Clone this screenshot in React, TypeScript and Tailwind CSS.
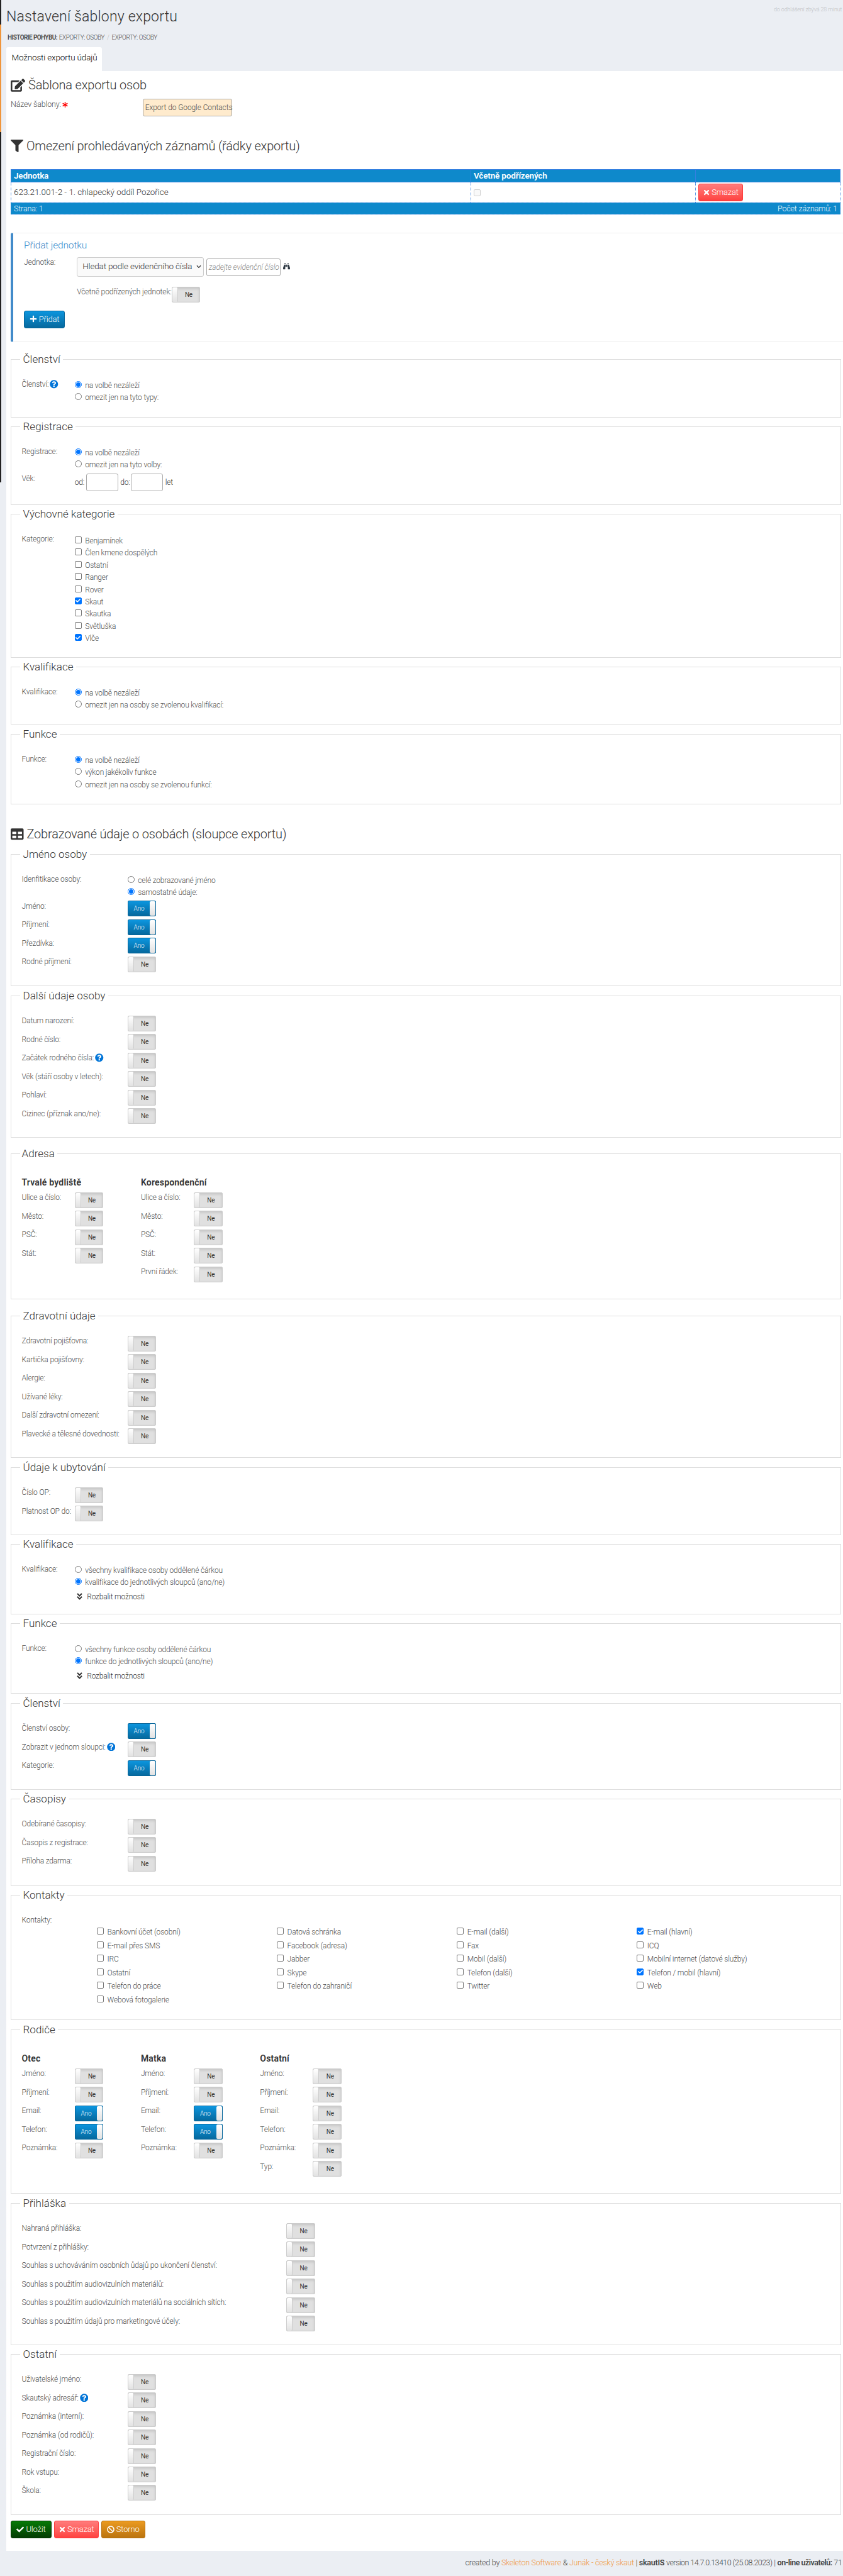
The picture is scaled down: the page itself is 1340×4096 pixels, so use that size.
import type { ReactNode } from "react";
import {
  FaEdit,
  FaFilter,
  FaAsterisk,
  FaTimes,
  FaPlus,
  FaTable,
  FaBinoculars,
  FaQuestionCircle,
  FaAngleDoubleDown,
  FaCheck,
  FaBan,
  FaChevronDown,
} from "react-icons/fa";

function Heading({ icon, className, children }: { icon: ReactNode; className: string; children: ReactNode }) {
  return (
    <h3
      className={`flex h-[26px] items-center whitespace-nowrap text-[20px] leading-[26px] tracking-[-0.18px] text-[#333] ${className}`}
    >
      {icon}
      <span>{children}</span>
    </h3>
  );
}

function Help() {
  return <FaQuestionCircle className="mt-[1px] ml-[2px] size-[13.5px] text-[#0275d8]" />;
}

function Label({ className = "w-[84.2px]", help, children }: { className?: string; help?: boolean; children: ReactNode }) {
  return (
    <div className={`mt-[0.6px] flex h-[17px] shrink-0 items-start whitespace-nowrap text-[#4c4c4c] leading-[17px] ${className}`}>
      <span>{children}</span>
      {help && <Help />}
    </div>
  );
}

function Switch({ on }: { on?: boolean }) {
  return on ? (
    <div className="flex h-[25px] w-[45.5px] shrink-0 overflow-hidden rounded-[2px] border border-[#05659a] bg-linear-to-b from-[#0c95de] to-[#06699e] text-[10px] leading-[23px] text-[#eef7fc]">
      <span className="flex-1 text-center">Ano</span>
      <span className="w-[9px] rounded-[2px] bg-linear-to-b from-white to-[#e2e2e2]" />
    </div>
  ) : (
    <div className="flex h-[25px] w-[45.5px] shrink-0 overflow-hidden rounded-[2px] border border-[#ccc] bg-[#e0e0e0] text-[10px] leading-[23px] font-normal text-[#333] shadow-[inset_0_2px_4px_rgba(0,0,0,0.13)]">
      <span className="w-[9px] rounded-[2px] border-r border-[#ccc] bg-linear-to-b from-white to-[#e2e2e2]" />
      <span className="flex-1 text-center">Ne</span>
    </div>
  );
}

type Item = { label: string; on?: boolean; help?: boolean };

function SwitchRows({ items, labelClass }: { items: Item[]; labelClass?: string }) {
  return (
    <div>
      {items.map((item) => (
        <div key={item.label} className="flex h-[29.45px] items-start">
          <Label className={labelClass} help={item.help}>
            {item.label}
          </Label>
          <Switch on={item.on} />
        </div>
      ))}
    </div>
  );
}

function Radio({ checked, children }: { checked?: boolean; children: ReactNode }) {
  return (
    <div className="flex h-[19.4px] items-center whitespace-nowrap text-[#4c4c4c]">
      <span
        className={`flex size-[11px] shrink-0 items-center justify-center rounded-full border ${
          checked ? "border-[#0075ff]" : "border-[#767676]"
        }`}
      >
        {checked && <span className="size-[7px] rounded-full bg-[#0075ff]" />}
      </span>
      <span className="mt-[4px] ml-[5.5px] leading-[15px]">{children}</span>
    </div>
  );
}

function Check({ checked, className = "h-[19.4px]", children }: { checked?: boolean; className?: string; children: ReactNode }) {
  return (
    <div className={`flex items-center whitespace-nowrap text-[#4c4c4c] ${className}`}>
      <span
        className={`flex size-[11px] shrink-0 items-center justify-center rounded-[2px] border ${
          checked ? "border-[#0075ff] bg-[#0075ff]" : "border-[#767676] bg-white"
        }`}
      >
        {checked && <FaCheck className="size-[8px] text-white" />}
      </span>
      <span className="mt-[4px] ml-[5.5px] leading-[15px]">{children}</span>
    </div>
  );
}

function Fieldset({
  title,
  className,
  legendClass = "px-[4.5px]",
  children,
}: {
  title: string;
  className: string;
  legendClass?: string;
  children: ReactNode;
}) {
  return (
    <section className={`mr-[3px] ml-[7px] border border-[#ddd] ${className}`}>
      <h4
        className={`-mt-[13px] ml-[14px] h-[24px] w-fit bg-white text-[17px] leading-[24px] tracking-[0.03px] whitespace-nowrap text-[#333] ${legendClass}`}
      >
        {title}
      </h4>
      <div className="flex pt-[20px] pl-[16.5px]">{children}</div>
    </section>
  );
}

function Options({ children }: { children: ReactNode }) {
  return <div className="-mt-[1px]">{children}</div>;
}

function Expand() {
  return (
    <div className="mt-[4px] flex h-[19px] items-center text-[#333]">
      <FaAngleDoubleDown className="ml-[1px] size-[13px]" />
      <span className="mt-[1px] ml-[5.5px] leading-[16px]">Rozbalit možnosti</span>
    </div>
  );
}

function Column({ title, className, items }: { title: string; className: string; items: Item[] }) {
  return (
    <div className={className}>
      <h5 className="mb-[6px] h-[24px] pt-[4px] text-[14px] leading-[20px] font-semibold tracking-[0.2px] text-[#333]">{title}</h5>
      <SwitchRows items={items} />
    </div>
  );
}

const wide = "w-[168.3px]";

const contacts: { label: string; checked?: boolean }[][] = [
  [
    { label: "Bankovní účet (osobní)" },
    { label: "Datová schránka" },
    { label: "E-mail (další)" },
    { label: "E-mail (hlavní)", checked: true },
  ],
  [{ label: "E-mail přes SMS" }, { label: "Facebook (adresa)" }, { label: "Fax" }, { label: "ICQ" }],
  [
    { label: "IRC" },
    { label: "Jabber" },
    { label: "Mobil (další)" },
    { label: "Mobilní internet (datové služby)" },
  ],
  [
    { label: "Ostatní" },
    { label: "Skype" },
    { label: "Telefon (další)" },
    { label: "Telefon / mobil (hlavní)", checked: true },
  ],
  [{ label: "Telefon do práce" }, { label: "Telefon do zahraničí" }, { label: "Twitter" }, { label: "Web" }],
  [{ label: "Webová fotogalerie" }],
];

const categories = [
  { label: "Benjamínek" },
  { label: "Člen kmene dospělých" },
  { label: "Ostatní" },
  { label: "Ranger" },
  { label: "Rover" },
  { label: "Skaut", checked: true },
  { label: "Skautka" },
  { label: "Světluška" },
  { label: "Vlče", checked: true },
];

const btn = "flex h-[28.6px] items-center justify-center rounded-[3px] border pb-[1px] text-[13px] text-white";

export default function App() {
  return (
    <div className="flex h-[4096px] w-[1340px] overflow-hidden bg-[#ebeef3] font-['Roboto','Liberation_Sans',sans-serif] text-[12px] font-light tracking-[-0.16px]">
      <div className="w-[2px] shrink-0">
        <div className="h-[39px] bg-[#222]" />
        <div className="h-[171px] bg-[#f0953b]" />
        <div className="h-[557px] bg-[#222]" />
      </div>

      <div className="ml-[8px] flex w-[1330px] shrink-0 flex-col">
        <header className="h-[113px] shrink-0">
          <div className="flex h-[53px] justify-between">
            <h1 className="mt-[11.6px] text-[23px] leading-[30px] tracking-[0.2px] text-[#333]">Nastavení šablony exportu</h1>
            <div className="mt-[8px] w-[110px] text-[9px] leading-[14px] tracking-[-0.15px] whitespace-nowrap text-[#c0c2c5]">
              do odhlášení zbývá 28 minut
            </div>
          </div>
          <div className="ml-[2px] flex h-[14px] text-[10px] leading-[14px] tracking-[-0.6px] whitespace-nowrap text-[#4c4c4c]">
            <b className="font-semibold">HISTORIE POHYBU:</b>
            <span className="ml-[3px] tracking-[-0.45px]">EXPORTY: OSOBY</span>
            <span className="mx-[4px] text-[#bbb]">/</span>
            <span className="tracking-[-0.45px]">EXPORTY: OSOBY</span>
          </div>
          <div className="mt-[8px] h-[38px] w-[152px] rounded-t-[3px] bg-white pl-[8.5px] text-[13.5px] leading-[33px] whitespace-nowrap text-black">
            Možnosti exportu údajů
          </div>
        </header>

        <main className="h-[3943px] shrink-0 bg-white">
          <div className="h-[9.4px]" />
          <Heading className="ml-[7px]" icon={<FaEdit className="mr-[5px] size-[23px]" />}>
            Šablona exportu osob
          </Heading>
          <div className="mt-[9px] ml-[7px] flex h-[28px]">
            <div className="flex w-[210.2px] text-[12.5px] leading-[18px] text-[#4c4c4c]">
              Název šablony:
              <FaAsterisk className="mt-[5px] ml-[2px] size-[9px] text-[#f00]" />
            </div>
            <div className="h-[28px] w-[141.5px] rounded-[3px] border border-[#aaa] bg-[#ffebcd] pl-[2.5px] text-[12px] leading-[26px] tracking-[-0.1px] whitespace-nowrap text-[#4c4c4c]">
              Export do Google Contacts
            </div>
          </div>

          <Heading className="mt-[33.8px] ml-[7px]" icon={<FaFilter className="mr-[5px] size-[20px]" />}>
            Omezení prohledávaných záznamů (řádky exportu)
          </Heading>

          <div className="mt-[24px] mr-[4px] ml-[7px] text-[13.5px]">
            <div className="flex h-[21px] border border-[#3580e0] bg-[#0e89cb] leading-[18px] font-semibold text-white">
              <div className="w-[731px] border-r border-[#3580e0] pl-[4px]">Jednotka</div>
              <div className="w-[357px] border-r border-[#3580e0] pl-[4px]">Včetně podřízených</div>
            </div>
            <div className="flex h-[32px] items-stretch border-x border-dotted border-[#3580e0] text-[#333]">
              <div className="w-[731px] border-r border-dotted border-[#3580e0] pl-[4px] leading-[31px] tracking-[-0.05px]">
                623.21.001-2 - 1. chlapecký oddíl Pozořice
              </div>
              <div className="flex w-[357px] items-center border-r border-dotted border-[#3580e0] pl-[4px]">
                <span className="size-[11px] rounded-[2px] border border-[#cfcfcf] bg-[#f9f9f9]" />
              </div>
              <div className="flex items-center pl-[4px]">
                <div className={`${btn} w-[71px] border-[#ff3c3c] bg-linear-to-b from-[#ff7b7b] to-[#ff4040]`}>
                  <FaTimes className="mr-[2px] size-[12px]" />
                  Smazat
                </div>
              </div>
            </div>
            <div className="flex h-[19px] justify-between border border-dotted border-[#3580e0] bg-[#0e89cb] px-[4px] text-[12.5px] leading-[17px] text-[#f2f9fd]">
              <span>Strana: 1</span>
              <span>Počet záznamů: 1</span>
            </div>
          </div>

          <div className="mt-[28.6px] ml-[7px] h-[174px] rounded-l-[3px] border-y border-l-[4px] border-y-[#eee] border-l-[#428bca] pl-[17px]">
            <h4 className="mt-[8.8px] h-[20px] text-[15.5px] leading-[20px] text-[#428bca]">Přidat jednotku</h4>
            <div className="mt-[9px] flex h-[31px]">
              <Label>Jednotka:</Label>
              <div className="flex h-[31px] w-[202px] shrink-0 items-center justify-between rounded-[3px] border border-[#ccc] bg-[#fafafa] pr-[3px] pl-[8px] text-[13.5px] whitespace-nowrap text-[#333]">
                <span className="-mt-[1px]">Hledat podle evidenčního čísla</span>
                <FaChevronDown className="size-[8px] shrink-0" />
              </div>
              <div className="mt-[2.5px] ml-[3.5px] h-[28px] w-[118px] rounded-[3px] border border-[#aaa] pl-[3px] text-[12px] leading-[27px] tracking-[-0.1px] whitespace-nowrap text-[#888] italic">
                zadejte evidenční číslo
              </div>
              <FaBinoculars className="mt-[9px] ml-[4px] size-[11px] text-[#2f3a44]" />
            </div>
            <div className="mt-[16px] ml-[84.2px] flex h-[25px]">
              <Label className="w-[150.5px] tracking-[-0.1px]">Včetně podřízených jednotek:</Label>
              <Switch />
            </div>
            <div className={`${btn} mt-[13px] w-[65px] border-[#05659a] bg-linear-to-b from-[#0c95de] to-[#06699e]`}>
              <FaPlus className="mr-[3px] size-[12px]" />
              Přidat
            </div>
          </div>

          <Fieldset title="Členství" className="mt-[27px] h-[93px]">
            <Label help>Členství:</Label>
            <Options>
              <Radio checked>na volbě nezáleží</Radio>
              <Radio>omezit jen na tyto typy:</Radio>
            </Options>
          </Fieldset>

          <Fieldset title="Registrace" className="mt-[14px] h-[125px]">
            <div>
              <div className="flex">
                <Label>Registrace:</Label>
                <Options>
                  <Radio checked>na volbě nezáleží</Radio>
                  <Radio>omezit jen na tyto volby:</Radio>
                </Options>
              </div>
              <div className="mt-[5px] flex h-[28px]">
                <Label>Věk:</Label>
                <div className="flex items-center leading-[28px] text-[#333]">
                  <span className="w-[18.5px]">od:</span>
                  <span className="h-[28px] w-[50.5px] rounded-[3px] border border-[#aaa]" />
                  <span className="w-[20.5px] pl-[3.5px]">do:</span>
                  <span className="h-[28px] w-[50.5px] rounded-[3px] border border-[#aaa]" />
                  <span className="pl-[4px]">let</span>
                </div>
              </div>
            </div>
          </Fieldset>

          <Fieldset title="Výchovné kategorie" className="mt-[14px] h-[229px]">
            <Label>Kategorie:</Label>
            <div>
              {categories.map((c) => (
                <Check key={c.label} checked={c.checked}>
                  {c.label}
                </Check>
              ))}
            </div>
          </Fieldset>

          <Fieldset title="Kvalifikace" className="mt-[14px] h-[92px]">
            <Label>Kvalifikace:</Label>
            <Options>
              <Radio checked>na volbě nezáleží</Radio>
              <Radio>omezit jen na osoby se zvolenou kvalifikací:</Radio>
            </Options>
          </Fieldset>

          <Fieldset title="Funkce" className="mt-[15px] h-[112px]">
            <Label>Funkce:</Label>
            <Options>
              <Radio checked>na volbě nezáleží</Radio>
              <Radio>výkon jakékoliv funkce</Radio>
              <Radio>omezit jen na osoby se zvolenou funkcí:</Radio>
            </Options>
          </Fieldset>

          <Heading className="mt-[34px] ml-[7px]" icon={<FaTable className="mr-[5px] size-[20.5px]" />}>
            Zobrazované údaje o osobách (sloupce exportu)
          </Heading>

          <Fieldset title="Jméno osoby" className="mt-[19px] h-[210px]">
            <div>
              <div className="mb-[4.5px] flex h-[38px]">
                <Label className={wide}>Idenfitikace osoby:</Label>
                <Options>
                  <Radio>celé zobrazované jméno</Radio>
                  <Radio checked>samostatné údaje:</Radio>
                </Options>
              </div>
              <SwitchRows
                labelClass={wide}
                items={[
                  { label: "Jméno:", on: true },
                  { label: "Příjmení:", on: true },
                  { label: "Přezdívka:", on: true },
                  { label: "Rodné příjmení:" },
                ]}
              />
            </div>
          </Fieldset>

          <Fieldset title="Další údaje osoby" className="mt-[15px] h-[226px]">
            <SwitchRows
              labelClass={wide}
              items={[
                { label: "Datum narození:" },
                { label: "Rodné číslo:" },
                { label: "Začátek rodného čísla:", help: true },
                { label: "Věk (stáří osoby v letech):" },
                { label: "Pohlaví:" },
                { label: "Cizinec (příznak ano/ne):" },
              ]}
            />
          </Fieldset>

          <Fieldset title="Adresa" legendClass="pl-[2.5px] pr-[4px]" className="mt-[25px] h-[232px]">
            <Column
              title="Trvalé bydliště"
              className="w-[189.4px]"
              items={[{ label: "Ulice a číslo:" }, { label: "Město:" }, { label: "PSČ:" }, { label: "Stát:" }]}
            />
            <Column
              title="Korespondenční"
              className="w-[189.4px]"
              items={[
                { label: "Ulice a číslo:" },
                { label: "Město:" },
                { label: "PSČ:" },
                { label: "Stát:" },
                { label: "První řádek:" },
              ]}
            />
          </Fieldset>

          <Fieldset title="Zdravotní údaje" className="mt-[26px] h-[226px]">
            <SwitchRows
              labelClass={wide}
              items={[
                { label: "Zdravotní pojišťovna:" },
                { label: "Kartička pojišťovny:" },
                { label: "Alergie:" },
                { label: "Užívané léky:" },
                { label: "Další zdravotní omezení:" },
                { label: "Plavecké a tělesné dovednosti:" },
              ]}
            />
          </Fieldset>

          <Fieldset title="Údaje k ubytování" className="mt-[15px] h-[108px]">
            <SwitchRows items={[{ label: "Číslo OP:" }, { label: "Platnost OP do:" }]} />
          </Fieldset>

          <Fieldset title="Kvalifikace" className="mt-[14px] h-[112px]">
            <Label>Kvalifikace:</Label>
            <Options>
              <Radio>všechny kvalifikace osoby oddělené čárkou</Radio>
              <Radio checked>kvalifikace do jednotlivých sloupců (ano/ne)</Radio>
              <Expand />
            </Options>
          </Fieldset>

          <Fieldset title="Funkce" className="mt-[14px] h-[112px]">
            <Label>Funkce:</Label>
            <Options>
              <Radio>všechny funkce osoby oddělené čárkou</Radio>
              <Radio checked>funkce do jednotlivých sloupců (ano/ne)</Radio>
              <Expand />
            </Options>
          </Fieldset>

          <Fieldset title="Členství" className="mt-[15px] h-[138px]">
            <SwitchRows
              labelClass={wide}
              items={[
                { label: "Členství osoby:", on: true },
                { label: "Zobrazit v jednom sloupci:", help: true },
                { label: "Kategorie:", on: true },
              ]}
            />
          </Fieldset>

          <Fieldset title="Časopisy" className="mt-[14px] h-[139px]">
            <SwitchRows
              labelClass={wide}
              items={[{ label: "Odebírané časopisy:" }, { label: "Časopis z registrace:" }, { label: "Příloha zdarma:" }]}
            />
          </Fieldset>

          <Fieldset title="Kontakty" className="mt-[14px] h-[199px]">
            <div>
              <Label>Kontakty:</Label>
              <div className="-mt-[2.6px] ml-[119.5px]">
                {contacts.map((row) => (
                  <div key={row[0].label} className="flex">
                    {row.map((c) => (
                      <div key={c.label} className="w-[286.1px]">
                        <Check checked={c.checked} className="h-[21.6px]">
                          {c.label}
                        </Check>
                      </div>
                    ))}
                  </div>
                ))}
              </div>
            </div>
          </Fieldset>

          <Fieldset title="Rodiče" className="mt-[15px] h-[261px]">
            <Column
              title="Otec"
              className="w-[189.4px]"
              items={[
                { label: "Jméno:" },
                { label: "Příjmení:" },
                { label: "Email:", on: true },
                { label: "Telefon:", on: true },
                { label: "Poznámka:" },
              ]}
            />
            <Column
              title="Matka"
              className="w-[189.4px]"
              items={[
                { label: "Jméno:" },
                { label: "Příjmení:" },
                { label: "Email:", on: true },
                { label: "Telefon:", on: true },
                { label: "Poznámka:" },
              ]}
            />
            <Column
              title="Ostatní"
              className="w-[189.4px]"
              items={[
                { label: "Jméno:" },
                { label: "Příjmení:" },
                { label: "Email:" },
                { label: "Telefon:" },
                { label: "Poznámka:" },
                { label: "Typ:" },
              ]}
            />
          </Fieldset>

          <Fieldset title="Přihláška" className="mt-[15px] h-[226px]">
            <SwitchRows
              labelClass="w-[420.9px]"
              items={[
                { label: "Nahraná přihláška:" },
                { label: "Potvrzení z přihlášky:" },
                { label: "Souhlas s uchováváním osobních ůdajů po ukončení členství:" },
                { label: "Souhlas s použitím audiovizulních materiálů:" },
                { label: "Souhlas s použitím audiovizulních materiálů na sociálních sítích:" },
                { label: "Souhlas s použitím údajů pro marketingové účely:" },
              ]}
            />
          </Fieldset>

          <Fieldset title="Ostatní" className="mt-[14px] h-[256px]">
            <SwitchRows
              labelClass={wide}
              items={[
                { label: "Uživatelské jméno:" },
                { label: "Skautský adresář:", help: true },
                { label: "Poznámka (interní):" },
                { label: "Poznámka (od rodičů):" },
                { label: "Registrační číslo:" },
                { label: "Rok vstupu:" },
                { label: "Škola:" },
              ]}
            />
          </Fieldset>

          <div className="mt-[9px] ml-[7px] flex gap-[3.5px]">
            <div className={`${btn} w-[65px] border-[#043a04] bg-linear-to-b from-[#067a06] to-[#033d03]`}>
              <FaCheck className="mr-[3px] size-[12px]" />
              Uložit
            </div>
            <div className={`${btn} w-[71.5px] border-[#ff3c3c] bg-linear-to-b from-[#ff7b7b] to-[#ff4040]`}>
              <FaTimes className="mr-[2px] size-[12px]" />
              Smazat
            </div>
            <div className={`${btn} w-[70.5px] border-[#b9720f] bg-linear-to-b from-[#eb9a20] to-[#bb740f]`}>
              <FaBan className="mr-[3px] size-[12px]" />
              Storno
            </div>
          </div>
        </main>

        <footer className="flex h-[40px] items-start pt-[10px] text-[12.5px] leading-[18px] text-[#444]">
          <div className="ml-[729.6px] tracking-[-0.25px] whitespace-nowrap">
            created by <span className="text-[#f0953b]">Skeleton Software</span> &amp;{" "}
            <span className="text-[#f0953b]">Junák - český skaut</span> | <b className="font-semibold">skautIS</b>{" "}
            <span className="tracking-[-0.55px]">version 14.7.0.13410 (25.08.2023)</span> |{" "}
            <b className="font-semibold tracking-[-0.5px]">on-line uživatelů:</b> 71
          </div>
        </footer>
      </div>
    </div>
  );
}
